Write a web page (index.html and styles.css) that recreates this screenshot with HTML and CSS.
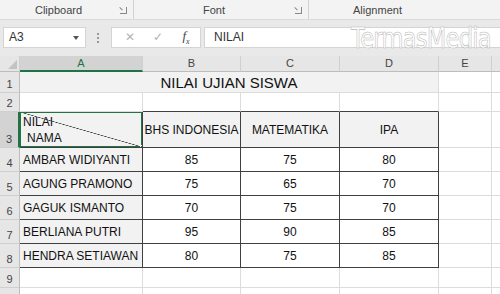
FILE: index.html
```html
<!DOCTYPE html>
<html lang="id">
<head>
    <meta charset="UTF-8">
    <title>Nilai Ujian Siswa</title>
    <link rel="stylesheet" href="styles.css">
</head>
<body>
    <div id="app">
        <div class="ribbon">
            <div class="group g-clip">Clipboard<span class="launcher"></span></div>
            <div class="group g-font">Font<span class="launcher"></span></div>
            <div class="group g-align">Alignment</div>
        </div>

        <div class="formula-bar">
            <div class="name-box">A3<span class="caret"></span></div>
            <div class="grip"></div>
            <div class="fx-box">
                <span class="fx-btn dim">&#x2715;</span>
                <span class="fx-btn dim">&#x2713;</span>
                <span class="fx-btn fx"><i>f</i><sub>x</sub></span>
            </div>
            <div class="input">NILAI</div>
            <div class="watermark">TermasMedia</div>
        </div>

        <div class="sheet">
            <!-- header -->
            <div class="corner"><span></span></div>
            <div class="ch sel">A</div>
            <div class="ch">B</div>
            <div class="ch">C</div>
            <div class="ch">D</div>
            <div class="ch">E</div>
            <div class="ch last"></div>

            <!-- row 1 -->
            <div class="rh">1</div>
            <div class="c title">NILAI UJIAN SISWA</div>
            <div class="c"></div>
            <div class="c last"></div>

            <!-- row 2 -->
            <div class="rh">2</div>
            <div class="c"></div>
            <div class="c tb"></div>
            <div class="c tb"></div>
            <div class="c tb"></div>
            <div class="c"></div>
            <div class="c last"></div>

            <!-- row 3 -->
            <div class="rh sel">3</div>
            <div class="c fill diag tr tb">
                <span class="d-top">NILAI</span>
                <span class="d-bot">NAMA</span>
            </div>
            <div class="c fill mid tr tb">BHS INDONESIA</div>
            <div class="c fill mid tr tb">MATEMATIKA</div>
            <div class="c fill mid tr tb">IPA</div>
            <div class="c"></div>
            <div class="c last"></div>

            <!-- data rows -->
            <div class="rh">4</div>
            <div class="c fill name tr tb">AMBAR WIDIYANTI</div>
            <div class="c mid tr tb">85</div>
            <div class="c mid tr tb">75</div>
            <div class="c mid tr tb">80</div>
            <div class="c"></div>
            <div class="c last"></div>

            <div class="rh">5</div>
            <div class="c fill name tr tb">AGUNG PRAMONO</div>
            <div class="c mid tr tb">75</div>
            <div class="c mid tr tb">65</div>
            <div class="c mid tr tb">70</div>
            <div class="c"></div>
            <div class="c last"></div>

            <div class="rh">6</div>
            <div class="c fill name tr tb">GAGUK ISMANTO</div>
            <div class="c mid tr tb">70</div>
            <div class="c mid tr tb">75</div>
            <div class="c mid tr tb">70</div>
            <div class="c"></div>
            <div class="c last"></div>

            <div class="rh">7</div>
            <div class="c fill name tr tb">BERLIANA PUTRI</div>
            <div class="c mid tr tb">95</div>
            <div class="c mid tr tb">90</div>
            <div class="c mid tr tb">85</div>
            <div class="c"></div>
            <div class="c last"></div>

            <div class="rh">8</div>
            <div class="c fill name tr tb">HENDRA SETIAWAN</div>
            <div class="c mid tr tb">80</div>
            <div class="c mid tr tb">75</div>
            <div class="c mid tr tb">85</div>
            <div class="c"></div>
            <div class="c last"></div>

            <div class="rh">9</div>
            <div class="c"></div>
            <div class="c"></div>
            <div class="c"></div>
            <div class="c"></div>
            <div class="c"></div>
            <div class="c last"></div>

            <div class="rh"></div>
            <div class="c"></div>
            <div class="c"></div>
            <div class="c"></div>
            <div class="c"></div>
            <div class="c"></div>
            <div class="c last"></div>
        </div>
    </div>
</body>
</html>
```

FILE: styles.css
```css
body {
    margin: 0;
    background: #fff;
    font-family: "Liberation Sans", Arial, sans-serif;
    color: #222;
    overflow: hidden;
}
#app {
    width: 500px;
    height: 294px;
    overflow: hidden;
}

/* ribbon group labels */
.ribbon {
    display: flex;
    height: 20px;
    background: #f3f3f3;
    border-bottom: 1px solid #dadada;
    box-sizing: border-box;
    font-size: 11px;
    color: #444;
}
.group {
    position: relative;
    display: flex;
    align-items: center;
    justify-content: center;
    border-right: 1px solid #d2d2d2;
    box-sizing: border-box;
}
.g-clip { width: 134px; padding-right: 16px; }
.g-font { width: 175px; padding-right: 14px; }
.g-align { flex: 1; border-right: none; padding-right: 54px; }
.launcher {
    position: absolute;
    right: 6px;
    top: 7px;
    width: 6px;
    height: 6px;
    border: 1px solid #888;
    border-width: 0 1px 1px 0;
}
.launcher::after {
    content: '';
    position: absolute;
    left: 0;
    top: 0;
    width: 4px;
    height: 1px;
    background: #888;
    transform: rotate(45deg);
    transform-origin: 0 0;
}

/* formula bar */
.formula-bar {
    position: relative;
    display: flex;
    align-items: center;
    height: 36px;
    padding: 0 0 2px 3px;
    background: #e9e9e9;
    box-sizing: border-box;
}
.name-box {
    position: relative;
    width: 83px;
    height: 21px;
    background: #fff;
    border: 1px solid #d4d4d4;
    box-sizing: border-box;
    font-size: 12px;
    line-height: 19px;
    padding-left: 5px;
    color: #333;
}
.caret {
    position: absolute;
    right: 6px;
    top: 8px;
    border: 3px solid transparent;
    border-top: 4px solid #555;
}
.grip {
    width: 2px;
    height: 11px;
    margin: 0 12px 0 11px;
    background: radial-gradient(circle, #999 0.8px, transparent 1px) 0 0 / 2px 4px;
}
.fx-box {
    display: flex;
    align-items: center;
    width: 90px;
    height: 21px;
    background: #fff;
    border: 1px solid #d4d4d4;
    box-sizing: border-box;
    padding-left: 4px;
}
.fx-btn {
    width: 29px;
    text-align: center;
    font-size: 12px;
}
.fx-btn.dim { color: #b4b4b4; }
.fx {
    font-family: "Liberation Serif", serif;
    color: #444;
    font-size: 13px;
}
.fx sub { font-size: 8px; font-style: italic; }
.input {
    flex: 1;
    height: 21px;
    margin-left: 3px;
    background: #fff;
    border: 1px solid #d4d4d4;
    border-right: none;
    box-sizing: border-box;
    font-size: 12px;
    line-height: 19px;
    padding-left: 9px;
    color: #333;
}
.watermark {
    position: absolute;
    left: 351px;
    top: 2px;
    font-family: "DejaVu Sans", sans-serif;
    font-size: 28px;
    letter-spacing: -1px;
    transform: scaleX(0.81);
    transform-origin: 0 0;
    color: #fff;
    -webkit-text-stroke: 0.6px #b8b8b8;
}

/* sheet grid */
.sheet {
    display: grid;
    grid-template-columns: 20px 123px 98px 99px 99px 53px 1fr;
    grid-template-rows: 16px 21px 19px 36px 24px 24px 24px 24px 24px 20px 20px;
    font-size: 12px;
}
.corner {
    position: relative;
    background: #e6e6e6;
    border-right: 1px solid #cfcfcf;
    border-bottom: 1px solid #bdbdbd;
}
.corner span {
    position: absolute;
    right: 2px;
    bottom: 2px;
    border-left: 9px solid transparent;
    border-bottom: 9px solid #c3c3c3;
}
.ch {
    background: #e6e6e6;
    border-right: 1px solid #cfcfcf;
    border-bottom: 1px solid #bdbdbd;
    color: #444;
    font-size: 11px;
    text-align: center;
    line-height: 15px;
}
.ch.sel {
    background: #d3d3d3;
    border-bottom: 2px solid #217346;
    color: #217346;
}
.ch.last { border-right: none; }
.rh {
    background: #e6e6e6;
    border-right: 1px solid #bdbdbd;
    border-bottom: 1px solid #cfcfcf;
    color: #444;
    font-size: 11px;
    display: flex;
    align-items: flex-end;
    justify-content: center;
    padding-bottom: 2px;
    box-sizing: border-box;
}
.rh.sel {
    background: #d3d3d3;
    border-right: 2px solid #217346;
}
.c {
    border-right: 1px solid #dcdcdc;
    border-bottom: 1px solid #dcdcdc;
    box-sizing: border-box;
    white-space: nowrap;
    overflow: hidden;
    display: flex;
    align-items: center;
    color: #111;
}
.c.last { border-right: none; }
.title {
    grid-column: span 4;
    justify-content: center;
    font-size: 15px;
    background: #f2f2f2;
    border-right: 1px solid #dcdcdc;
    padding-top: 1px;
}
.fill { background: #f2f2f2; }
.mid { justify-content: center; }
.name { padding-left: 3px; }
.tr { border-right: 1px solid #404040; }
.tb { border-bottom: 1px solid #404040; }

/* A3: diagonal header cell */
.diag {
    position: relative;
    flex-direction: column;
    align-items: flex-start;
    justify-content: space-between;
    padding: 3px 0 2px 3px;
    background:
        linear-gradient(to top right, transparent calc(50% - 0.6px), #333 50%, transparent calc(50% + 0.6px)),
        #f2f2f2;
}
.diag::before {
    content: '';
    position: absolute;
    left: -1px;
    top: -1px;
    right: -1px;
    bottom: -1px;
    border: 2px solid #217346;
}
.diag::after {
    content: '';
    position: absolute;
    right: -3px;
    bottom: -3px;
    width: 5px;
    height: 5px;
    background: #217346;
    border: 1px solid #fff;
    box-sizing: border-box;
    z-index: 2;
}
.d-bot { padding-left: 4px; }
```
